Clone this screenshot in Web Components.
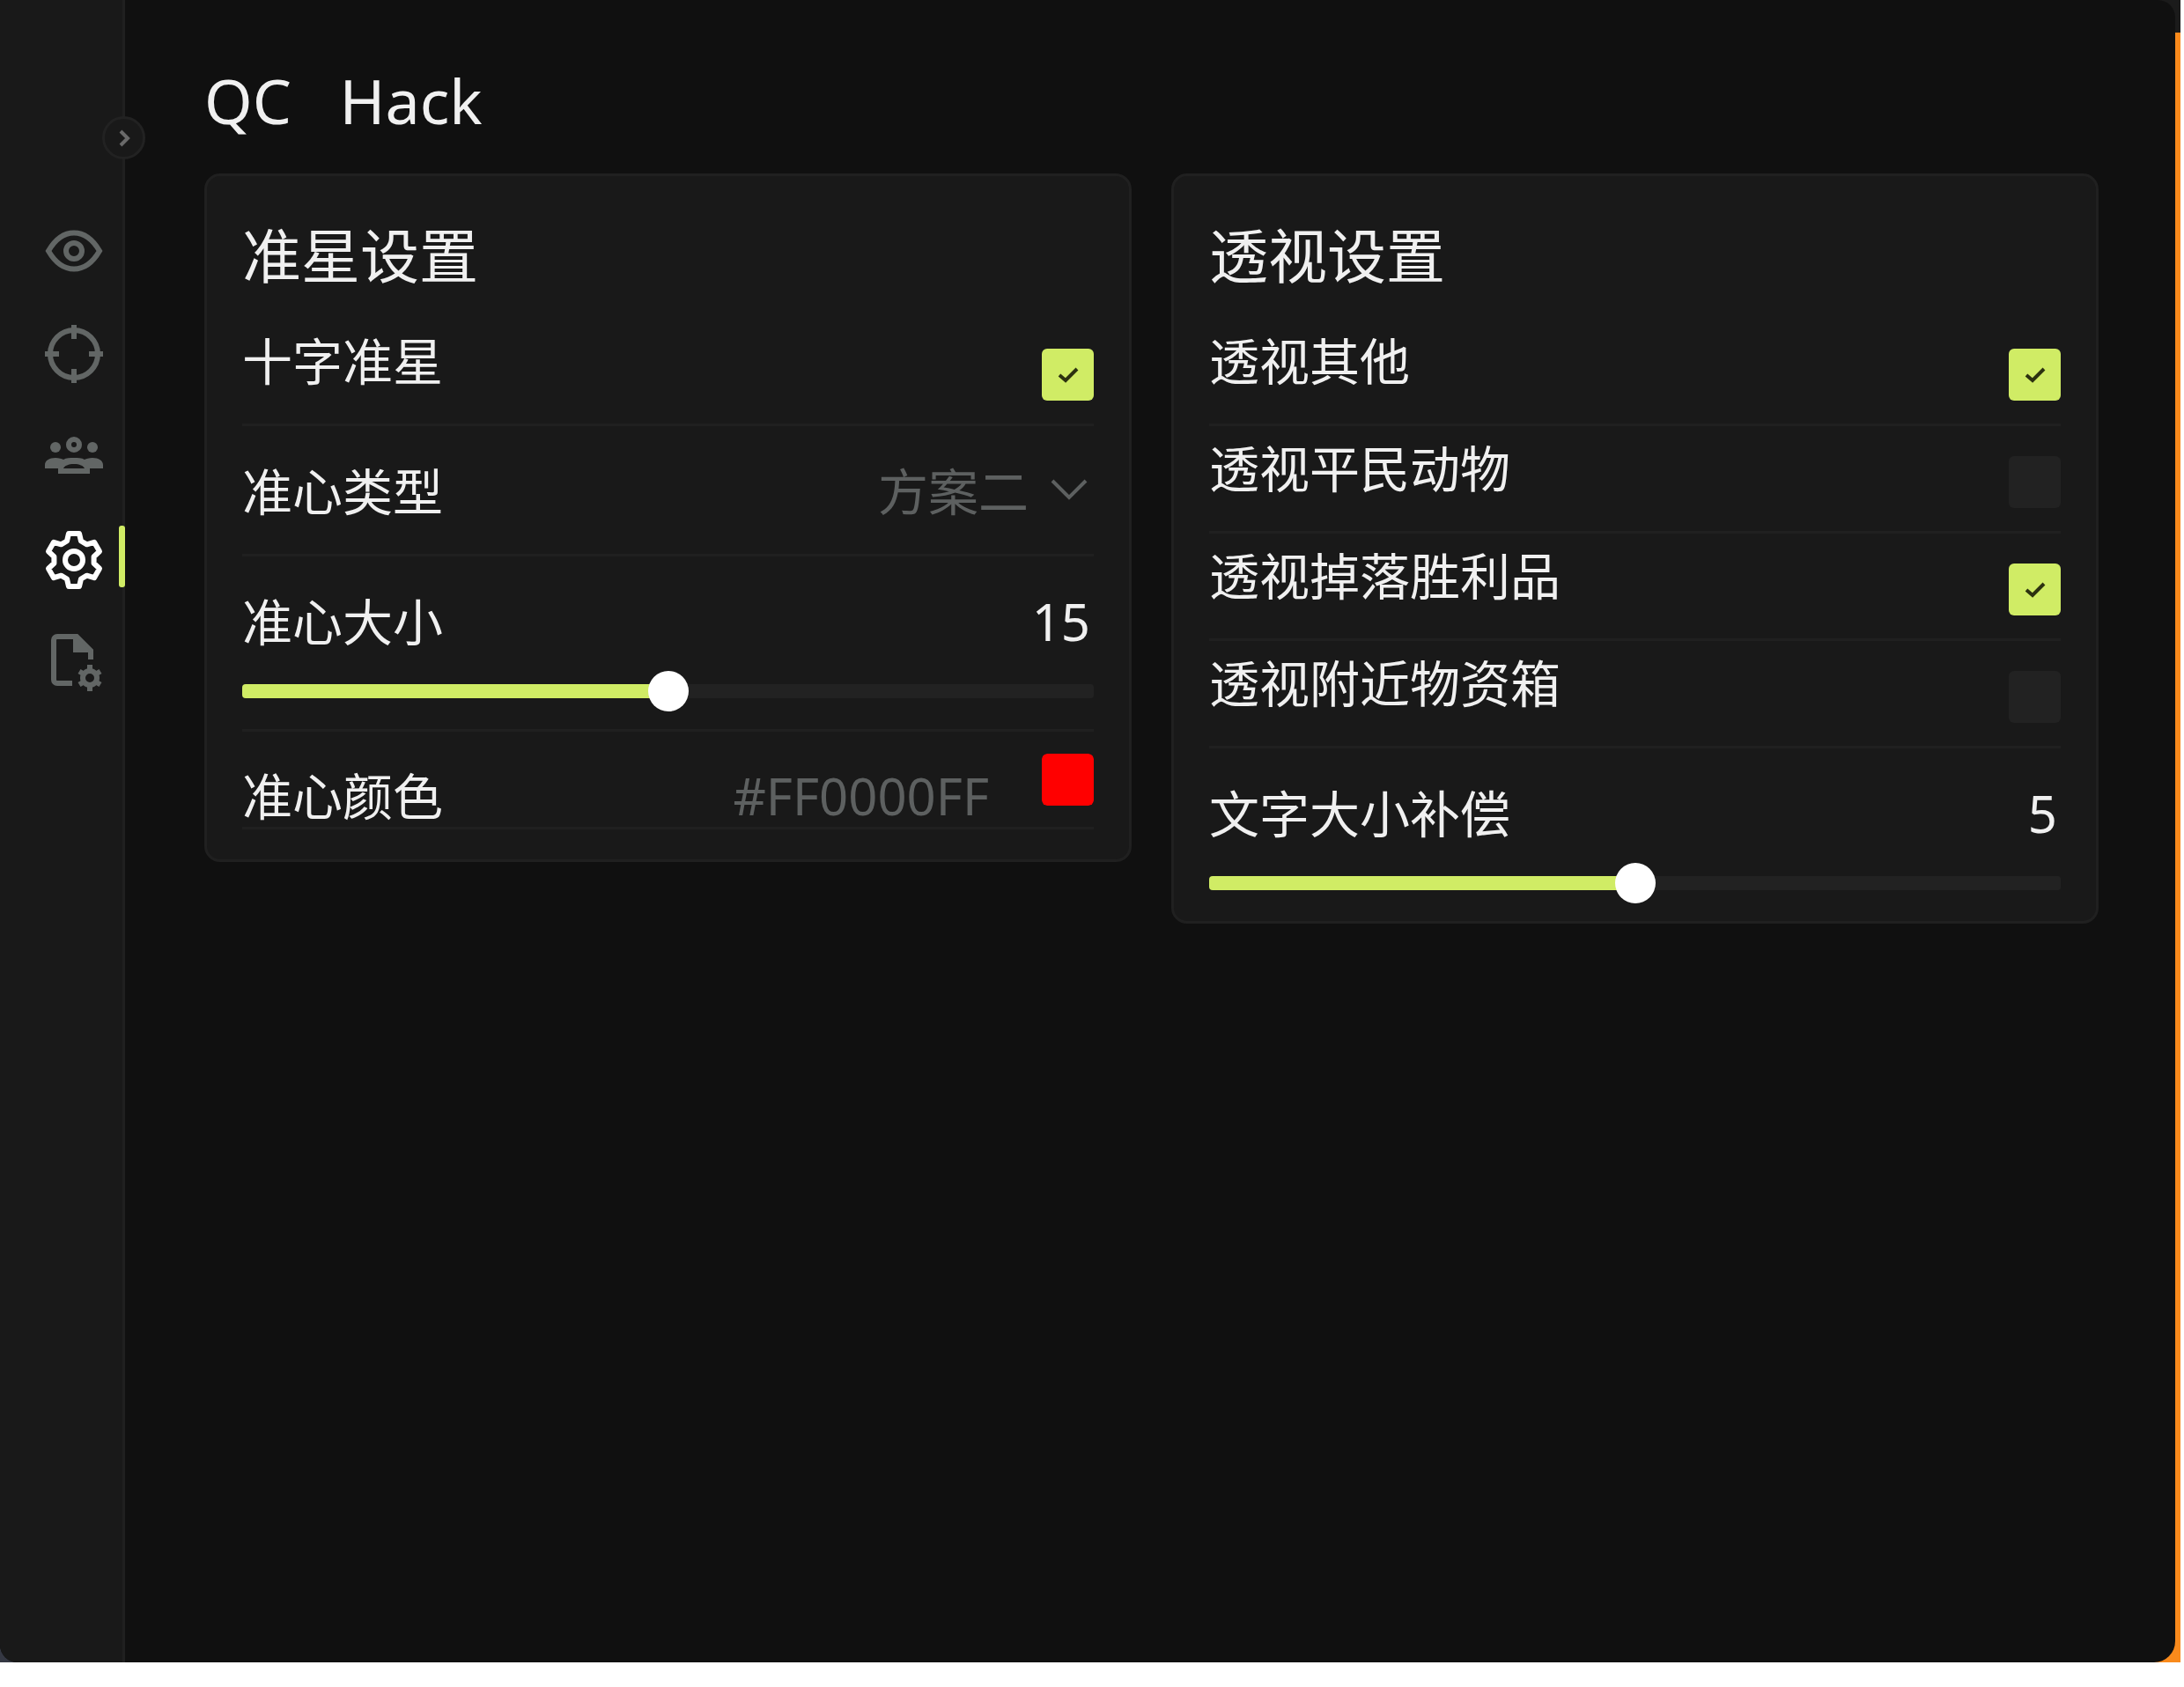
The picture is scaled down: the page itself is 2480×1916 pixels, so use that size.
<!DOCTYPE html>
<html lang="zh-CN">
<head>
<meta charset="utf-8">
<title>QC Hack</title>
<style>
  :root {
    --color-bg: #101010;
    --color-panel: #191919;
    --color-line: #202020;
    --color-control: #222222;
    --color-accent: #d0ec65;
    --color-text: #f0f0f0;
    --color-muted: #5d6060;
    --font-xl: 70px;
    --font-lg: 67px;
    --font-md: 57px;
    --font-value: 58px;
    --line: 64px;
  }

  body {
    margin: 0;
    background: #fff;
    color: var(--color-text);
    font-family: "Noto Sans", "Noto Sans CJK SC", sans-serif;
    font-size: var(--font-md);
    line-height: var(--line);
  }
</style>
</head>
<body>

<app-window>
  <nav-rail slot="rail"></nav-rail>
  <span slot="title">QC   Hack</span>

  <settings-card heading="准星设置">
    <check-row label="十字准星" checked></check-row>
    <select-row label="准心类型" options="方案一,方案二,方案三" value="方案二"></select-row>
    <slider-row label="准心大小" max="30" value="15"></slider-row>
    <color-row label="准心颜色" value="#FF0000FF"></color-row>
  </settings-card>

  <settings-card heading="透视设置">
    <check-row label="透视其他" checked></check-row>
    <check-row label="透视平民动物"></check-row>
    <check-row label="透视掉落胜利品" checked></check-row>
    <check-row label="透视附近物资箱"></check-row>
    <slider-row label="文字大小补偿" max="10" value="5" last></slider-row>
  </settings-card>
</app-window>

<script>
const rowCss = `
  :host {
    display: block;
    border-bottom: 3px solid var(--color-line);
  }
  .row {
    display: flex;
    align-items: flex-start;
    justify-content: space-between;
  }
  label, output { white-space: nowrap; }
  input, select {
    margin: 0;
    padding: 0;
    border: 0;
    font: inherit;
    appearance: none;
    cursor: pointer;
  }
`;

/* AppWindow: the desktop strip behind, the rounded window, rail and card grid */
class AppWindow extends HTMLElement {
  constructor() {
    super();
    this.attachShadow({ mode: 'open' }).innerHTML = `
      <style>
        :host {
          display: flex;
          box-sizing: border-box;
          min-height: calc(100vh - 28px);
          margin: 0 4px 28px 0;
          padding-right: 6px;
          background:
            linear-gradient(to right, #353843 50%, transparent 50%),
            linear-gradient(#1b1b1b 37px, #f98a1c 37px);
        }
        .window {
          display: flex;
          flex: 1;
          border-radius: 0 20px 24px 20px;
          background: var(--color-bg);
        }
        main {
          flex: 1;
          padding: 69px 87px 40px 90px;
        }
        h1 {
          margin: 0 0 38px;
          font-size: var(--font-xl);
          font-weight: 400;
          line-height: 90px;
          white-space: pre;
        }
        .cards {
          display: grid;
          grid-template-columns: 1fr 1fr;
          gap: 45px;
          align-items: start;
        }
      </style>
      <div class="window">
        <slot name="rail"></slot>
        <main>
          <h1><slot name="title"></slot></h1>
          <div class="cards"><slot></slot></div>
        </main>
      </div>
    `;
  }
}

/* NavRail */
const navIcons = [
  ['视觉', `
    <path d="M4 33C11 21 21 12.500 33 12.500S55 21 62 33C55 45 45 53.500 33 53.500S11 45 4 33z"/>
    <circle cx="33" cy="33" r="9"/>`],
  ['准星', `
    <circle cx="33" cy="33" r="27"/>
    <path d="M33 0v16M33 50v16M0 33h16M50 33h16"/>`],
  ['队伍', `
    <circle cx="33" cy="19" r="6"/>
    <g fill="currentColor" stroke="none">
      <circle cx="12" cy="22" r="6"/>
      <circle cx="54" cy="22" r="6"/>
      <path fill-rule="evenodd" d="M0 46v-4c0-5 5-8 12-8 4 0 7 1 9 2 3-2 8-2 12-2s9 0 12 2c2-1 5-2 9-2 7 0 12 3 12 8v4H51v6H15v-6zM21 46h24c-1-3-6-5-12-5s-11 2-12 5z"/>
    </g>`],
  ['设置', `
    <path stroke-linejoin="round" d="M25 11.500 27 3H39L41 11.500 47.600 15.300 56 12.800 62 23.200 55.600 29.200V36.800L62 42.800 56 53.200 47.600 50.700 41 54.500 39 63H27L25 54.500 18.400 50.700 10 53.200 4 42.800 10.400 36.800V29.200L4 23.200 10 12.800 18.400 15.300z"/>
    <circle cx="33" cy="33" r="10"/>`],
  ['配置', `
    <path d="M31 56H14a4 4 0 0 1-4-4V7a4 4 0 0 1 4-4h22l16 16v10"/>
    <path d="M32 3v18h21L36 3z" fill="currentColor" stroke="none"/>
    <circle cx="51" cy="50" r="8"/>
    <path stroke-width="6" d="M51 42v-7M51 58v7M57 46l6-3.500M57 54l6 3.500M45 46l-6-3.500M45 54l-6 3.500"/>`],
];

class NavRail extends HTMLElement {
  constructor() {
    super();
    const active = 3;
    const items = navIcons.map(([name, shape], i) => `
      <button aria-label="${name}" class="item ${i === active ? 'active' : ''}">
        <svg width="66" height="66" viewBox="0 0 66 66" fill="none" stroke="currentColor" stroke-width="6">${shape}</svg>
      </button>
    `).join('');

    this.attachShadow({ mode: 'open' }).innerHTML = `
      <style>
        :host {
          position: relative;
          display: block;
          box-sizing: border-box;
          width: 142px;
          border-right: 3px solid var(--color-line);
          border-bottom-left-radius: 20px;
          background: var(--color-panel);
        }
        nav {
          display: flex;
          flex-direction: column;
          padding-top: 226px;
        }
        button { cursor: pointer; }
        .item {
          position: relative;
          display: flex;
          align-items: center;
          height: 117px;
          padding: 0 0 0 51px;
          border: 0;
          background: none;
          color: #626665;
        }
        .item.active { color: #fff; }
        .item.active::after {
          content: "";
          position: absolute;
          top: 20px;
          right: -3px;
          width: 7px;
          height: 70px;
          border-radius: 3px;
          background: var(--color-accent);
        }
        .toggle {
          position: absolute;
          top: 132px;
          right: -26px;
          display: flex;
          align-items: center;
          justify-content: center;
          width: 49px;
          height: 49px;
          padding: 0;
          border: 3px solid var(--color-control);
          border-radius: 50%;
          background: var(--color-panel);
          color: #6a6a6a;
        }
      </style>
      <button class="toggle" aria-label="展开">
        <svg width="14" height="20" viewBox="0 0 14 20" fill="none" stroke="currentColor" stroke-width="4"><path d="M3 2l8 8-8 8"/></svg>
      </button>
      <nav>${items}</nav>
    `;
  }
}

/* SettingsCard */
class SettingsCard extends HTMLElement {
  constructor() {
    super();
    this.attachShadow({ mode: 'open' }).innerHTML = `
      <style>
        :host {
          display: block;
          min-width: 0;
          padding: 46px 40px 0;
          border: 3px solid var(--color-line);
          border-radius: 18px;
          background: var(--color-panel);
        }
        h2 {
          margin: 0 0 28px;
          font-size: var(--font-lg);
          font-weight: 400;
          line-height: 88px;
        }
      </style>
      <h2>${this.getAttribute('heading')}</h2>
      <slot></slot>
    `;
  }
}

/* CheckRow */
class CheckRow extends HTMLElement {
  constructor() {
    super();
    this.attachShadow({ mode: 'open' }).innerHTML = `
      <style>
        ${rowCss}
        .row { padding: 16px 0 26px; }
        .box {
          display: grid;
          margin-top: 18px;
        }
        .box > * { grid-area: 1 / 1; }
        input {
          width: 59px;
          height: 59px;
          border-radius: 6px;
          background: var(--color-control);
        }
        input:checked { background: var(--color-accent); }
        svg {
          place-self: center;
          visibility: hidden;
          pointer-events: none;
        }
        input:checked + svg { visibility: visible; }
      </style>
      <div class="row">
        <label for="field">${this.getAttribute('label')}</label>
        <div class="box">
          <input id="field" type="checkbox" ${this.hasAttribute('checked') ? 'checked' : ''}>
          <svg width="24" height="18" viewBox="0 0 24 18" fill="none" stroke="#2c3210" stroke-width="4"><path d="M2 9l7 6L22 2"/></svg>
        </div>
      </div>
    `;
  }
}

/* SelectRow */
class SelectRow extends HTMLElement {
  constructor() {
    super();
    const value = this.getAttribute('value');
    const options = this.getAttribute('options').split(',')
      .map(o => `<option ${o === value ? 'selected' : ''}>${o}</option>`).join('');

    this.attachShadow({ mode: 'open' }).innerHTML = `
      <style>
        ${rowCss}
        .row { padding: 42px 0 39px; }
        .picker {
          display: grid;
          align-items: center;
        }
        .picker > * { grid-area: 1 / 1; }
        select {
          height: var(--line);
          padding-right: 74px;
          background: none;
          color: var(--color-muted);
        }
        svg {
          justify-self: end;
          margin: 0 7px 4px 0;
          color: var(--color-muted);
          pointer-events: none;
        }
      </style>
      <div class="row">
        <label for="field">${this.getAttribute('label')}</label>
        <div class="picker">
          <select id="field">${options}</select>
          <svg width="42" height="24" viewBox="0 0 42 24" fill="none" stroke="currentColor" stroke-width="4"><path d="M2 2l19 19L40 2"/></svg>
        </div>
      </div>
    `;
  }
}

/* SliderRow */
class SliderRow extends HTMLElement {
  constructor() {
    super();
    const value = this.getAttribute('value');
    this.attachShadow({ mode: 'open' }).innerHTML = `
      <style>
        ${rowCss}
        :host { padding: 42px 0 20px; }
        :host([last]) { border-bottom: 0; }
        output {
          padding-right: 4px;
          font-size: var(--font-value);
        }
        input {
          display: block;
          width: 100%;
          height: 46px;
          margin-top: 24px;
          background: none;
        }
        input::-webkit-slider-runnable-track {
          height: 16px;
          border-radius: 4px;
          background: linear-gradient(to right, var(--color-accent) var(--fill), var(--color-control) var(--fill));
        }
        input::-webkit-slider-thumb {
          appearance: none;
          width: 46px;
          height: 46px;
          margin-top: -15px;
          border-radius: 50%;
          background: #fff;
        }
      </style>
      <div class="row">
        <label for="field">${this.getAttribute('label')}</label>
        <output for="field">${value}</output>
      </div>
      <input id="field" type="range" min="0" max="${this.getAttribute('max')}" value="${value}">
    `;
    this.input = this.shadowRoot.querySelector('input');
    this.input.addEventListener('input', () => this.update());
    this.update();
  }

  update() {
    const { value, max } = this.input;
    this.input.style.setProperty('--fill', `${value / max * 100}%`);
    this.shadowRoot.querySelector('output').textContent = value;
  }
}

/* ColorRow */
class ColorRow extends HTMLElement {
  constructor() {
    super();
    const value = this.getAttribute('value');
    this.attachShadow({ mode: 'open' }).innerHTML = `
      <style>
        ${rowCss}
        :host { margin-bottom: 34px; }
        .row { height: 83px; padding-top: 25px; }
        label, .hex { margin-top: 16px; }
        .hex {
          flex: 1;
          min-width: 0;
          height: var(--line);
          margin-right: 60px;
          background: none;
          color: var(--color-muted);
          font-size: var(--font-value);
          text-align: right;
          outline: 0;
        }
        .swatch {
          width: 59px;
          height: 59px;
          border-radius: 6px;
          background: none;
        }
        .swatch::-webkit-color-swatch-wrapper { padding: 0; }
        .swatch::-webkit-color-swatch {
          border: 0;
          border-radius: 6px;
        }
      </style>
      <div class="row">
        <label for="field">${this.getAttribute('label')}</label>
        <input id="field" class="hex" type="text" value="${value}">
        <input class="swatch" type="color" aria-label="${this.getAttribute('label')}" value="${value.slice(0, 7).toLowerCase()}">
      </div>
    `;
  }
}

customElements.define('app-window', AppWindow);
customElements.define('nav-rail', NavRail);
customElements.define('settings-card', SettingsCard);
customElements.define('check-row', CheckRow);
customElements.define('select-row', SelectRow);
customElements.define('slider-row', SliderRow);
customElements.define('color-row', ColorRow);
</script>
</body>
</html>
